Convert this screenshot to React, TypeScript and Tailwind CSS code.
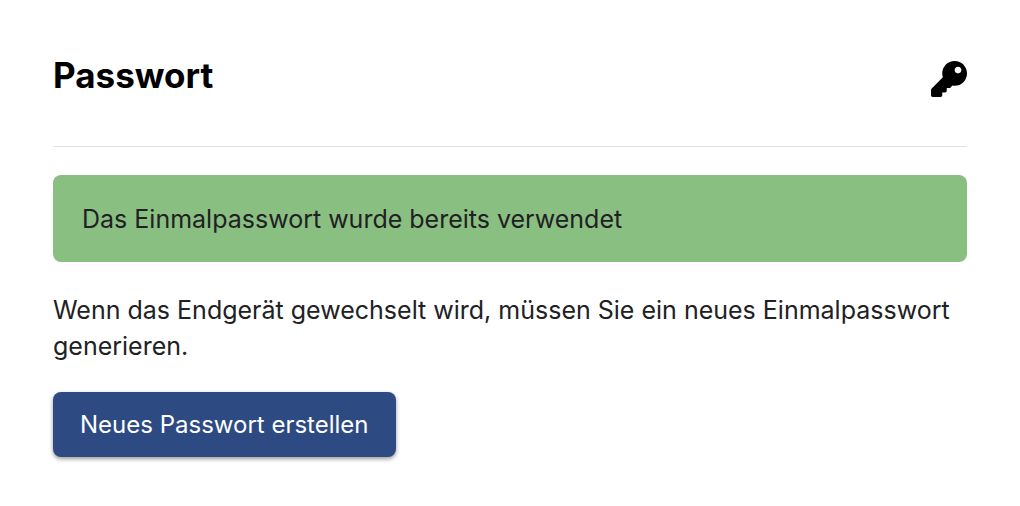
import React from "react";
import { FaKey } from "react-icons/fa";

export default function App() {
  return (
    <main className="min-h-screen bg-white px-[53px] pt-[50px] pb-12 font-['Inter','Liberation_Sans',sans-serif] text-[#212124]">
      <header className="flex items-start justify-between border-b border-[#e2e2e2] pb-[46px]">
        <h1 className="text-[35px] leading-[50px] font-bold text-black">Passwort</h1>
        <FaKey className="mt-[11px] size-9 text-black" aria-hidden="true" />
      </header>
      <div role="status" className="mt-7 rounded-lg bg-[#8abf82] px-[29px] pt-[26px] pb-6 text-[25px] leading-[37px]">
        Das Einmalpasswort wurde bereits verwendet
      </div>
      <p className="mt-[30px] text-[25px] leading-9">
        Wenn das Endgerät gewechselt wird, müssen Sie ein neues Einmalpasswort generieren.
      </p>
      <button
        type="button"
        className="mt-7 rounded-lg bg-[#2d4a82] px-[27px] py-[14px] text-[24px] leading-[37px] text-white shadow-[0_2px_4px_rgba(0,0,0,0.4)]"
      >
        Neues Passwort erstellen
      </button>
    </main>
  );
}
